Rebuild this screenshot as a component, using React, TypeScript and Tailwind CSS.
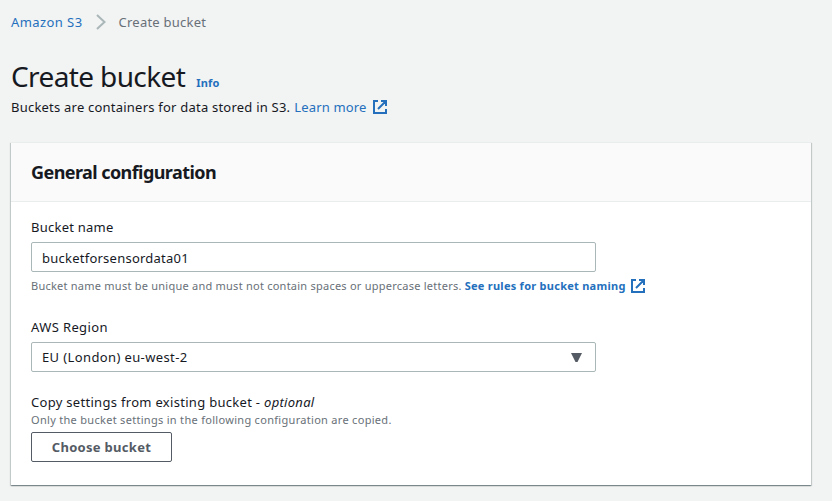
const ff = "font-['Noto_Sans',sans-serif]";

function External({ className = '' }: { className?: string }) {
  return (
    <svg className={className} width="14" height="14" viewBox="0 0 14 14" fill="none" stroke="#2470bd" strokeWidth="2">
      <path d="M5 1H1v12h12V9M8 1h5v5M5 9l7.5-7.5" />
    </svg>
  );
}

export default function App() {
  return (
    <div className={`${ff} h-[501px] w-[832px] overflow-hidden bg-[#f2f3f3] text-[13px] leading-5 tracking-[0.24px] text-[#16191f]`}>
      <nav className="flex h-[43px] items-center pl-[11px]">
        <a className="tracking-[0.42px] text-[#2470bd]">Amazon S3</a>
        <svg className="ml-[10px] mr-[10px]" width="16" height="16" viewBox="0 0 16 16" fill="none" stroke="#aab7b8" strokeWidth="2"><path d="M4 1l7.5 7L4 15" /></svg>
        <span className="text-[#687078]">Create bucket</span>
      </nav>
      <header className="h-[99px] pl-[11px] pt-[15px]">
        <div className="flex h-[39px] items-baseline">
          <h1 className="text-[28px] leading-[36px] tracking-[-0.62px]">Create bucket</h1>
          <a className="ml-[11px] text-[11px] font-bold text-[#2470bd]">Info</a>
        </div>
        <p className="flex items-center tracking-[0.22px]">Buckets are containers for data stored in S3.<a className="ml-1 tracking-[0.15px] text-[#2470bd]">Learn more</a><External className="ml-[6px]" /></p>
      </header>
      <main className="ml-[11px] h-[343px] w-[800px] bg-white shadow-[0_1px_1px_0_rgba(0,28,36,0.3),1px_1px_1px_0_rgba(0,28,36,0.15),-1px_1px_1px_0_rgba(0,28,36,0.15)]">
        <div className="flex h-[60px] items-center border-b border-t border-[#eaeded] bg-[#fafafa] pl-5">
          <h2 className="text-[18px] font-bold tracking-[-0.57px]">General configuration</h2>
        </div>
        <div className="pl-5 pt-[15px]">
          <label className="block">Bucket name</label>
          <div className="mt-[5px] flex h-[30px] w-[565px] items-center rounded-[2px] border border-[#aab7b8] px-[10px] pt-[2px]">bucketforsensordata01</div>
          <p className="mt-1 flex h-5 items-center text-[11px] text-[#687078]">Bucket name must be unique and must not contain spaces or uppercase letters.<a className="ml-[3px] font-bold tracking-[0.26px] text-[#2470bd]">See rules for bucket naming</a><External className="ml-[5px]" /></p>
          <label className="mt-[21px] block tracking-[0.38px]">AWS Region</label>
          <div className="mt-[5px] flex h-[30px] w-[565px] items-center justify-between rounded-[2px] border border-[#aab7b8] px-[10px] tracking-[0.38px]">EU (London) eu-west-2<svg className="mr-[3px]" width="11" height="9" viewBox="0 0 11 9"><path d="M0 0h11L6.5 9h-2z" fill="#545b64" /></svg></div>
          <label className="mt-5 block tracking-[0.3px]">Copy settings from existing bucket - <i>optional</i></label>
          <p className="text-[11px] leading-4 tracking-[0.3px] text-[#687078]">Only the bucket settings in the following configuration are copied.</p>
          <button className="mt-1 h-[30px] w-[141px] rounded-[2px] border border-[#545b64] font-bold tracking-[0.3px] text-[#545b64]">Choose bucket</button>
        </div>
      </main>
    </div>
  );
}
